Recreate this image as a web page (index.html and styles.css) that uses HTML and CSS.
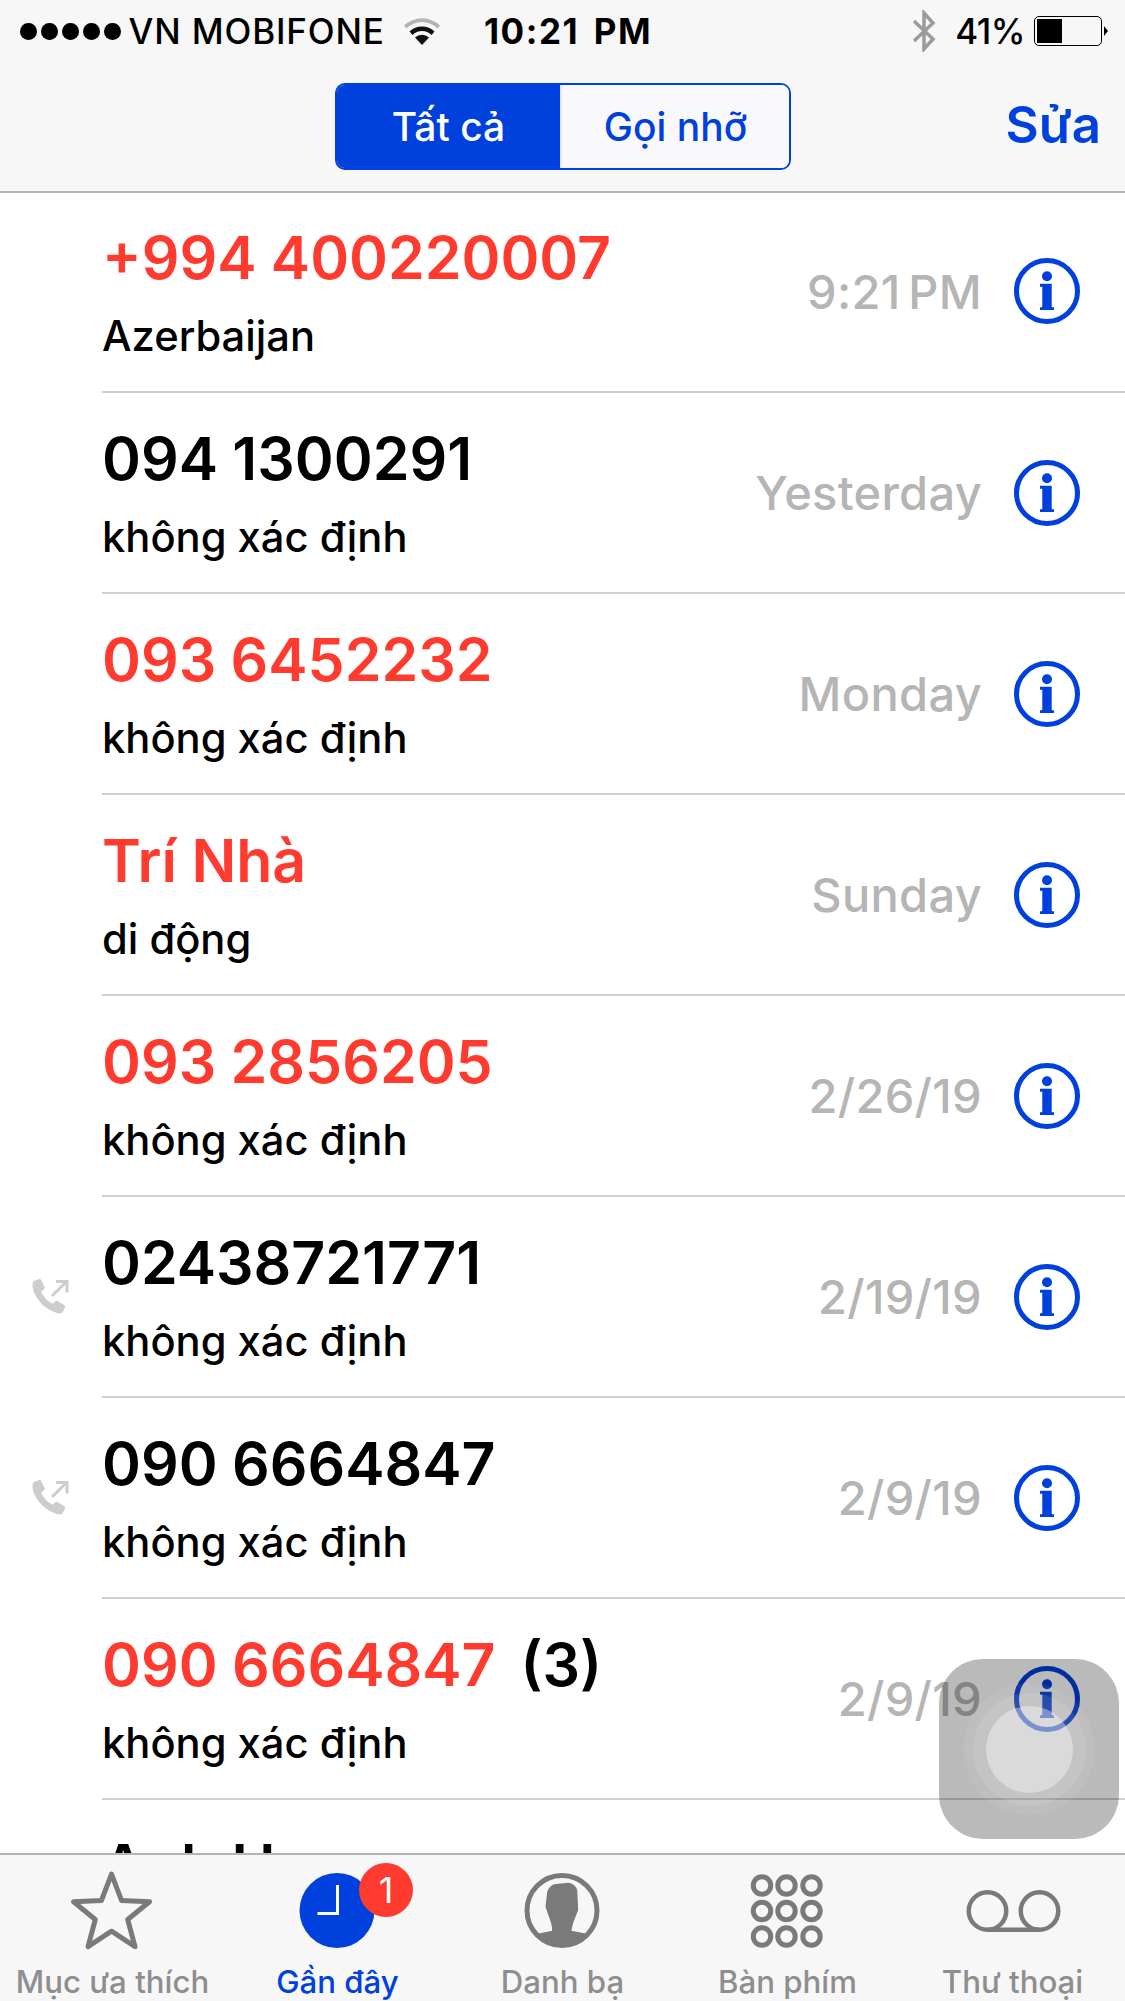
FILE: index.html
```html
<!DOCTYPE html>
<html lang="vi">
<head>
<meta charset="utf-8">
<title>Gần đây</title>
<link rel="stylesheet" href="styles.css">
</head>
<body>
<svg class="defs" width="0" height="0">
  <symbol id="info" viewBox="0 0 68 68">
    <circle cx="34" cy="34" r="30.5" fill="none" stroke="currentColor" stroke-width="5"/>
    <circle cx="34" cy="19.300" r="5" fill="currentColor"/>
    <path d="M27 26.700h11.700v22.500c0 .6.300 1 1 1h1.300v2.700H27v-2.700h1.300c.7 0 1-.4 1-1V29.700H27z" fill="currentColor"/>
  </symbol>
  <symbol id="outgoing" viewBox="0 0 38 38">
    <path d="M3 1.500 7.500 0c1 0 1.600.6 2 1.500l3 6.500c.3 1 0 1.800-.7 2.400l-2.600 2c1.600 4.700 6.500 10 11.500 12.300l2.400-2.300c.8-.7 1.600-.8 2.500-.3l6.400 3.800c1 .6 1.300 1.500.9 2.500l-2 4.300c-.6 1.200-2 1.800-3.500 1.700C14 32.500.5 18 .5 5.500.5 3.500 1.500 2 3 1.500Z" fill="#cdcdcd"/>
    <path d="M20 17 34 3M24 2.500h11v11" fill="none" stroke="#cdcdcd" stroke-width="3"/>
  </symbol>
</svg>
<div class="phone">
  <header class="header">
    <div class="status">
      <div class="status-left">
        <span class="dots"><i></i><i></i><i></i><i></i><i></i></span>
        <span class="carrier">VN MOBIFONE</span>
        <svg class="wifi" width="38" height="28" viewBox="0 0 38 28">
          <path d="M1 8.500a26 26 0 0 1 36 0l-2.500 3a22 22 0 0 0-31 0z" fill="#b4b4b4"/>
          <path d="M6.500 14.500a18 18 0 0 1 25 0l-3 3.500a13.500 13.500 0 0 0-19 0z" fill="#111"/>
          <path d="M12 20.500a10 10 0 0 1 14 0L19 28z" fill="#111"/>
        </svg>
      </div>
      <span class="clock">10:21 PM</span>
      <div class="status-right">
        <svg class="bt" width="24" height="42" viewBox="0 0 24 42">
          <path d="M2 11 21 29 12 39V3l9 10L2 31" fill="none" stroke="#9b9b9b" stroke-width="3.500"/>
        </svg>
        <span class="pct">41%</span>
        <span class="battery"><span class="battery-fill"></span></span>
        <span class="battery-tip"></span>
      </div>
    </div>
    <div class="nav">
      <div class="segments">
        <span class="seg seg-on">Tất cả</span>
        <span class="seg">Gọi nhỡ</span>
      </div>
      <span class="edit">Sửa</span>
    </div>
  </header>

  <main class="list">
    <div class="row">
      <div class="row-body">
        <div class="who"><div class="name missed">+994 400220007</div><div class="sub">Azerbaijan</div></div>
        <div class="when">9:21 PM</div>
        <svg class="info"><use href="#info"/></svg>
      </div>
    </div>
    <div class="row">
      <div class="row-body">
        <div class="who"><div class="name">094 1300291</div><div class="sub">không xác định</div></div>
        <div class="when">Yesterday</div>
        <svg class="info"><use href="#info"/></svg>
      </div>
    </div>
    <div class="row">
      <div class="row-body">
        <div class="who"><div class="name missed">093 6452232</div><div class="sub">không xác định</div></div>
        <div class="when">Monday</div>
        <svg class="info"><use href="#info"/></svg>
      </div>
    </div>
    <div class="row">
      <div class="row-body">
        <div class="who"><div class="name missed">Trí Nhà</div><div class="sub">di động</div></div>
        <div class="when">Sunday</div>
        <svg class="info"><use href="#info"/></svg>
      </div>
    </div>
    <div class="row">
      <div class="row-body">
        <div class="who"><div class="name missed">093 2856205</div><div class="sub">không xác định</div></div>
        <div class="when">2/26/19</div>
        <svg class="info"><use href="#info"/></svg>
      </div>
    </div>
    <div class="row">
      <svg class="out"><use href="#outgoing"/></svg>
      <div class="row-body">
        <div class="who"><div class="name">02438721771</div><div class="sub">không xác định</div></div>
        <div class="when">2/19/19</div>
        <svg class="info"><use href="#info"/></svg>
      </div>
    </div>
    <div class="row">
      <svg class="out"><use href="#outgoing"/></svg>
      <div class="row-body">
        <div class="who"><div class="name">090 6664847</div><div class="sub">không xác định</div></div>
        <div class="when">2/9/19</div>
        <svg class="info"><use href="#info"/></svg>
      </div>
    </div>
    <div class="row">
      <div class="row-body">
        <div class="who"><div class="name"><span class="missed">090 6664847</span><span class="count">(3)</span></div><div class="sub">không xác định</div></div>
        <div class="when">2/9/19</div>
        <svg class="info"><use href="#info"/></svg>
      </div>
    </div>
    <div class="row">
      <div class="row-body">
        <div class="who"><div class="name">Anh Hoang</div></div>
      </div>
    </div>
  </main>

  <nav class="tabs">
    <div class="tab">
      <svg class="tab-icon" width="90" height="90" viewBox="0 0 90 90">
        <path d="M43.500 4.200 53.500 30.400 81.500 31.800 59.700 49.500 67 76.600 43.500 61.200 20 76.600 27.300 49.500 5.500 31.800 33.500 30.400Z" fill="none" stroke="#7a7a7a" stroke-width="5" stroke-linejoin="round"/>
      </svg>
      <span class="tab-label">Mục ưa thích</span>
    </div>
    <div class="tab tab-on">
      <span class="recent">
        <svg class="tab-icon" width="90" height="90" viewBox="0 0 90 90">
          <circle cx="44" cy="40.500" r="37.500" fill="#0040dd"/>
          <path d="M44.500 15V43.500H24.500" fill="none" stroke="#fff" stroke-width="3"/>
        </svg>
        <span class="badge">1</span>
      </span>
      <span class="tab-label">Gần đây</span>
    </div>
    <div class="tab">
      <svg class="tab-icon" width="90" height="90" viewBox="0 0 90 90">
        <circle cx="44" cy="40.500" r="35" fill="none" stroke="#7a7a7a" stroke-width="5"/>
        <path d="M29.200 21.700C31 17 34 14.500 37.500 14L50.800 12.700C55 13.500 58.500 16.500 59.200 20L60.200 40 56.500 49.300C55 53 54 57 53.500 60.700L69.900 64A35 35 0 0 1 18.100 64L34.200 60.700C34 56 33 52 31.800 49.300L27.500 36.700Z" fill="#7a7a7a"/>
      </svg>
      <span class="tab-label">Danh bạ</span>
    </div>
    <div class="tab">
      <svg class="tab-icon" width="90" height="90" viewBox="0 0 90 90">
        <g fill="none" stroke="#7a7a7a" stroke-width="5">
          <circle cx="19" cy="15.500" r="8.700"/><circle cx="43.500" cy="15.500" r="8.700"/><circle cx="68.500" cy="15.500" r="8.700"/>
          <circle cx="19" cy="41" r="8.700"/><circle cx="43.500" cy="41" r="8.700"/><circle cx="68.500" cy="41" r="8.700"/>
          <circle cx="19" cy="66.500" r="8.700"/><circle cx="43.500" cy="66.500" r="8.700"/><circle cx="68.500" cy="66.500" r="8.700"/>
        </g>
      </svg>
      <span class="tab-label">Bàn phím</span>
    </div>
    <div class="tab">
      <svg class="tab-icon" width="90" height="90" viewBox="0 0 90 90">
        <g fill="none" stroke="#7a7a7a" stroke-width="4.500">
          <circle cx="19.500" cy="41" r="18.750"/>
          <circle cx="71.500" cy="41" r="18.750"/>
          <path d="M19.500 59.750H71.500"/>
        </g>
      </svg>
      <span class="tab-label">Thư thoại</span>
    </div>
  </nav>

  <div class="touch"><span class="touch-a"><span class="touch-b"><span class="touch-c"></span></span></span></div>
</div>
</body>
</html>
```
FILE: styles.css
```css
* { box-sizing: border-box; }
html, body { margin: 0; padding: 0; background: #fff; }
body { font-family: Inter, "Liberation Sans", sans-serif; }
.defs { position: absolute; }
.phone {
  position: relative;
  width: 1125px;
  height: 2001px;
  overflow: hidden;
  display: flex;
  flex-direction: column;
}
.header {
  flex: none;
  height: 193px;
  background: #f7f7f7;
  border-bottom: 2px solid #b4b4b4;
  display: flex;
  flex-direction: column;
}
.status {
  height: 62px;
  display: grid;
  grid-template-columns: 464px auto 1fr;
  align-items: center;
  padding-left: 20px;
  color: #000;
  font-size: 35px;
  font-weight: 500;
}
.status-left { display: flex; align-items: center; }
.dots { display: flex; gap: 4.500px; margin-right: 8px; }
.dots i { width: 16.500px; height: 17px; border-radius: 50%; background: #000; }
.carrier { letter-spacing: .85px; white-space: nowrap; }
.wifi { margin-left: 18px; }
.clock {
  font-size: 35px;
  font-weight: 700;
  letter-spacing: 1.500px;
  word-spacing: 5px;
  white-space: nowrap;
}
.status-right { display: flex; align-items: center; justify-self: end; padding-right: 17px; }
.bt { margin-right: 19px; }
.pct { margin-right: 9px; letter-spacing: -.5px; }
.battery {
  width: 68px;
  height: 30px;
  border: 1.500px solid #000;
  border-radius: 5px;
  padding: 2px;
  display: flex;
}
.battery-fill { width: 25px; background: #000; }
.battery-tip {
  width: 0;
  height: 0;
  margin-left: 2px;
  border-left: 4px solid #000;
  border-top: 5px solid transparent;
  border-bottom: 5px solid transparent;
}
.nav {
  flex: 1;
  display: grid;
  grid-template-columns: 335px 456px 1fr;
  align-items: start;
  padding-top: 21px;
}
.segments {
  grid-column: 2;
  display: flex;
  height: 87px;
  border-radius: 10px;
  border: 2px solid #0040dd;
  overflow: hidden;
  font-size: 39px;
  font-weight: 500;
  color: #0040dd;
}
.seg { flex: 1; display: flex; align-items: center; justify-content: center; background: #f9f9fb; }
.seg-on { background: #0040dd; color: #fff; flex: none; width: 225px; border-right: 2px solid #dfe6f8; }
.edit {
  justify-self: end;
  padding-right: 24px;
  margin-top: 12px;
  font-size: 51px;
  line-height: 60px;
  font-weight: 600;
  color: #0040dd;
}
.list { flex: 1; min-height: 0; overflow: hidden; }
.row {
  position: relative;
  height: 201px;
  padding-left: 102px;
}
.row:first-child { height: 200px; }
.row:first-child .row-body { padding-bottom: 2px; }
.row:first-child .who { padding-top: 29px; }
.row-body {
  height: 100%;
  display: flex;
  align-items: center;
  padding-right: 44px;
  border-bottom: 2px solid #cfcfcf;
}
.who { flex: 1; align-self: flex-start; padding-top: 30px; min-width: 0; }
.name {
  font-size: 59px;
  line-height: 72px;
  font-weight: 600;
  word-spacing: -.5px;
  color: #000;
  white-space: nowrap;
}
.missed { color: #ff3b30; }
.count { margin-left: 25px; }
.sub {
  margin-top: 12px;
  font-size: 41.700px;
  line-height: 60px;
  font-weight: 500;
  color: #000;
}
.when {
  font-size: 47px;
  font-weight: 500;
  letter-spacing: .3px;
  color: #b5b5b5;
  margin-right: 31px;
  white-space: nowrap;
  word-spacing: -5px;
}
.info { width: 68px; height: 68px; color: #0040dd; flex: none; }
.out { position: absolute; left: 32px; top: 82px; width: 38px; height: 38px; }
.tabs {
  flex: none;
  height: 148px;
  background: #f7f7f7;
  border-top: 2px solid #b4b4b4;
  display: grid;
  grid-template-columns: repeat(5, 1fr);
}
.tab {
  display: flex;
  flex-direction: column;
  align-items: center;
  padding-top: 15px;
  color: #8e8e8e;
}
.tab-icon { display: block; overflow: visible; }
.tab-label {
  margin-top: 3px;
  font-size: 31.200px;
  line-height: 38px;
  font-weight: 500;
  white-space: nowrap;
}
.tab-on { color: #0040dd; }
.recent { position: relative; display: block; width: 90px; height: 90px; }
.badge {
  position: absolute;
  left: 66.500px;
  top: -7px;
  width: 54px;
  height: 54px;
  border-radius: 50%;
  background: #ff3b30;
  color: #fff;
  font-size: 36px;
  font-weight: 400;
  display: flex;
  align-items: center;
  justify-content: center;
}
.touch {
  position: absolute;
  left: 939px;
  top: 1659px;
  width: 180px;
  height: 180px;
  border-radius: 44px;
  background: rgba(0,0,0,.27);
  display: flex;
  align-items: center;
  justify-content: center;
}
.touch-a, .touch-b, .touch-c { display: flex; align-items: center; justify-content: center; border-radius: 50%; }
.touch-a { width: 132px; height: 132px; background: rgba(255,255,255,.06); }
.touch-b { width: 113px; height: 113px; background: rgba(255,255,255,.1); }
.touch-c { width: 87px; height: 87px; background: rgba(255,255,255,.38); }
```
